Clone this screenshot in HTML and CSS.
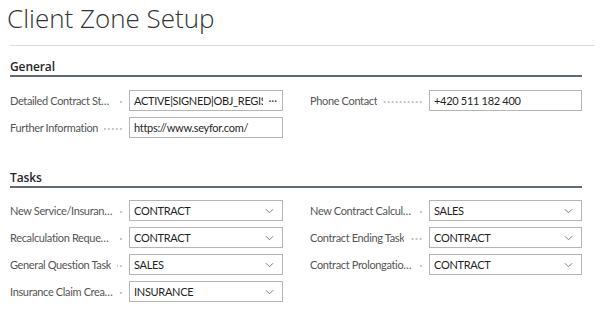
FILE: index.html
```html
<!DOCTYPE html>
<html lang="en">
<head>
    <meta charset="UTF-8">
    <title>Client Zone Setup</title>
    <link rel="stylesheet" href="styles.css">
</head>
<body>
    <h1 class="page-title">Client Zone Setup</h1>
    <div class="title-rule"></div>

    <!-- General -->
    <section class="group">
        <h2 class="group-title">General</h2>
        <div class="fields">
            <div class="field">
                <div class="label"><span>Detailed Contract Status</span><i class="leader"></i></div>
                <div class="box">
                    <span class="value">ACTIVE|SIGNED|OBJ_REGIS|OBJ_DONE</span>
                    <span class="more">&middot;&middot;&middot;</span>
                </div>
            </div>
            <div class="field">
                <div class="label"><span>Phone Contact</span><i class="leader"></i></div>
                <div class="box"><span class="value">+420 511 182 400</span></div>
            </div>
            <div class="field">
                <div class="label"><span>Further Information</span><i class="leader"></i></div>
                <div class="box"><span class="value">https://www.seyfor.com/</span></div>
            </div>
        </div>
    </section>

    <!-- Tasks -->
    <section class="group tasks">
        <h2 class="group-title">Tasks</h2>
        <div class="fields">
            <div class="field">
                <div class="label"><span>New Service/Insurance Task</span><i class="leader"></i></div>
                <div class="box select"><span class="value">CONTRACT</span><svg class="chevron" viewBox="0 0 10 6"><path d="M1 1l4 4 4-4"/></svg></div>
            </div>
            <div class="field">
                <div class="label"><span>New Contract Calculation Task</span><i class="leader"></i></div>
                <div class="box select"><span class="value">SALES</span><svg class="chevron" viewBox="0 0 10 6"><path d="M1 1l4 4 4-4"/></svg></div>
            </div>
            <div class="field">
                <div class="label"><span>Recalculation Request Task</span><i class="leader"></i></div>
                <div class="box select"><span class="value">CONTRACT</span><svg class="chevron" viewBox="0 0 10 6"><path d="M1 1l4 4 4-4"/></svg></div>
            </div>
            <div class="field">
                <div class="label"><span>Contract Ending Task</span><i class="leader"></i></div>
                <div class="box select"><span class="value">CONTRACT</span><svg class="chevron" viewBox="0 0 10 6"><path d="M1 1l4 4 4-4"/></svg></div>
            </div>
            <div class="field">
                <div class="label"><span>General Question Task</span><i class="leader"></i></div>
                <div class="box select"><span class="value">SALES</span><svg class="chevron" viewBox="0 0 10 6"><path d="M1 1l4 4 4-4"/></svg></div>
            </div>
            <div class="field">
                <div class="label"><span>Contract Prolongation Task</span><i class="leader"></i></div>
                <div class="box select"><span class="value">CONTRACT</span><svg class="chevron" viewBox="0 0 10 6"><path d="M1 1l4 4 4-4"/></svg></div>
            </div>
            <div class="field">
                <div class="label"><span>Insurance Claim Creation Task</span><i class="leader"></i></div>
                <div class="box select"><span class="value">INSURANCE</span><svg class="chevron" viewBox="0 0 10 6"><path d="M1 1l4 4 4-4"/></svg></div>
            </div>
        </div>
    </section>
</body>
</html>
```

FILE: styles.css
```css
* {
    margin: 0;
    padding: 0;
    box-sizing: border-box;
}

body {
    background: #fff;
    color: #212121;
    font-family: 'Lato', 'Open Sans', sans-serif;
    font-size: 11px;
    letter-spacing: -0.35px;
    overflow: hidden;
}

/* Page title */
.page-title {
    font-family: 'Open Sans', sans-serif;
    font-weight: 300;
    font-size: 26px;
    line-height: 36px;
    letter-spacing: 0;
    color: #333;
    padding: 0 0 0 7px;
}

.title-rule {
    height: 1px;
    background: #dcdcdc;
    margin: 9px 10px 0 10px;
}

/* Groups */
.group {
    width: 572px;
    margin-left: 10px;
}

.group-title {
    font-family: 'Open Sans', sans-serif;
    font-size: 12px;
    font-weight: 600;
    letter-spacing: -0.1px;
    color: #262626;
    line-height: 16px;
    padding-top: 13px;
    border-bottom: 2px solid #606a76;
}

.tasks {
    margin-top: 19px;
}

.fields {
    display: grid;
    grid-template-columns: 273px 272px;
    column-gap: 27px;
    row-gap: 6px;
    padding-top: 13px;
}

.tasks .fields {
    padding-top: 12px;
}

.field {
    display: flex;
    align-items: center;
    height: 21px;
}

/* Label with dotted leader */
.label {
    width: 119px;
    display: flex;
    align-items: center;
    color: #555;
    padding-right: 6px;
}

.label span {
    white-space: nowrap;
    overflow: hidden;
    text-overflow: ellipsis;
    max-width: 104px;
}

.leader {
    flex: 1;
    min-width: 4px;
    height: 2px;
    margin: 3px 0 0 6px;
    background-image: radial-gradient(circle, #c4c4c4 0.7px, transparent 0.9px);
    background-size: 4px 2px;
    background-position: right center;
    background-repeat: repeat-x;
}

/* Input boxes */
.box {
    flex: 1;
    height: 21px;
    border: 1px solid #b4b4b4;
    display: flex;
    align-items: center;
    padding: 0 4px;
    background: #fff;
    overflow: hidden;
}

.box .value {
    flex: 1;
    white-space: nowrap;
    overflow: hidden;
    letter-spacing: -0.3px;
    color: #1f1f1f;
}

.more {
    color: #444;
    letter-spacing: 0;
    padding-left: 5px;
    padding-right: 1px;
}

.chevron {
    width: 9px;
    height: 6px;
    margin-right: 4px;
    fill: none;
    stroke: #6e6e6e;
    stroke-width: 1;
}
```
